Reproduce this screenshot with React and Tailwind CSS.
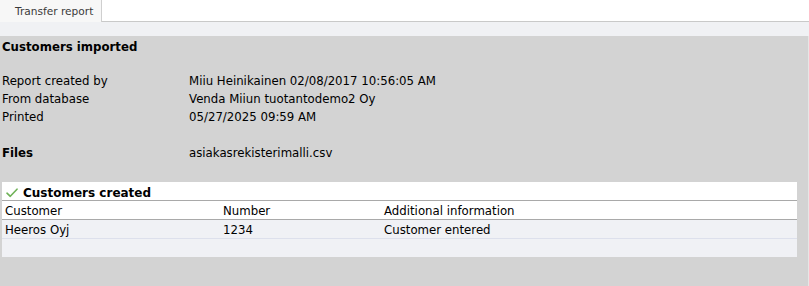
import React from "react";

const font = { fontFamily: '"DejaVu Sans", Verdana, sans-serif' };

function Check() {
  return (
    <svg width="12" height="10" viewBox="0 0 12 10" className="shrink-0">
      <path d="M1 5.2 L4.3 8.3 L11 1.2" fill="none" stroke="#6fb257" strokeWidth="1.6" strokeLinecap="round" strokeLinejoin="round" />
    </svg>
  );
}

const info = [
  ["Report created by", "Miiu Heinikainen 02/08/2017 10:56:05 AM"],
  ["From database", "Venda Miiun tuotantodemo2 Oy"],
  ["Printed", "05/27/2025 09:59 AM"],
];

const row = "h-[18px] pt-[4px] flex items-center";

export default function App() {
  return (
    <div className="w-[809px] h-[286px] overflow-hidden bg-white text-[11.75px] text-black flex flex-col" style={font}>
      <div className="h-[22px] flex border-b border-[#c9c9c9] bg-white shrink-0">
        <div className="w-[102px] h-[22px] bg-[#f7f7f7] border-r border-[#cfcfcf] flex items-center pt-[1px] pl-[15px] text-[10.6px] text-[#3a3a3a] -mb-px">
          Transfer report
        </div>
      </div>
      <div className="h-[14px] bg-[#f0f1f4] shrink-0" />
      <div className="flex-1 bg-[#d3d3d3] border-r border-[#e6e6e6] pt-[1px] pl-[2px] pr-[11px]">
        <div className={row + " font-bold"}>Customers imported</div>
        <div className="h-[16px]" />
        {info.map(([k, v]) => (
          <div key={k} className={row}>
            <div className="w-[187px]">{k}</div>
            <div>{v}</div>
          </div>
        ))}
        <div className="h-[18px]" />
        <div className={row}>
          <div className="w-[187px] font-bold">Files</div>
          <div>asiakasrekisterimalli.csv</div>
        </div>
        <div className="h-[21px]" />
        <div className="bg-[#f0f1f5]">
          <div className="h-[19px] pt-[3px] bg-white border-b border-[#a9a9a9] flex items-center pl-[4px] gap-[5px]">
            <Check />
            <span className="font-bold text-[12px]">Customers created</span>
          </div>
          <div className="h-[19px] pt-[3px] bg-white border-b border-[#a9a9a9] flex items-center pl-[3px]">
            <div className="w-[218px]">Customer</div>
            <div className="w-[161px]">Number</div>
            <div>Additional information</div>
          </div>
          <div className="h-[19px] pt-[3px] border-b border-[#dde0ec] flex items-center pl-[3px]">
            <div className="w-[218px]">Heeros Oyj</div>
            <div className="w-[161px]">1234</div>
            <div>Customer entered</div>
          </div>
          <div className="h-[18px]" />
        </div>
      </div>
    </div>
  );
}
